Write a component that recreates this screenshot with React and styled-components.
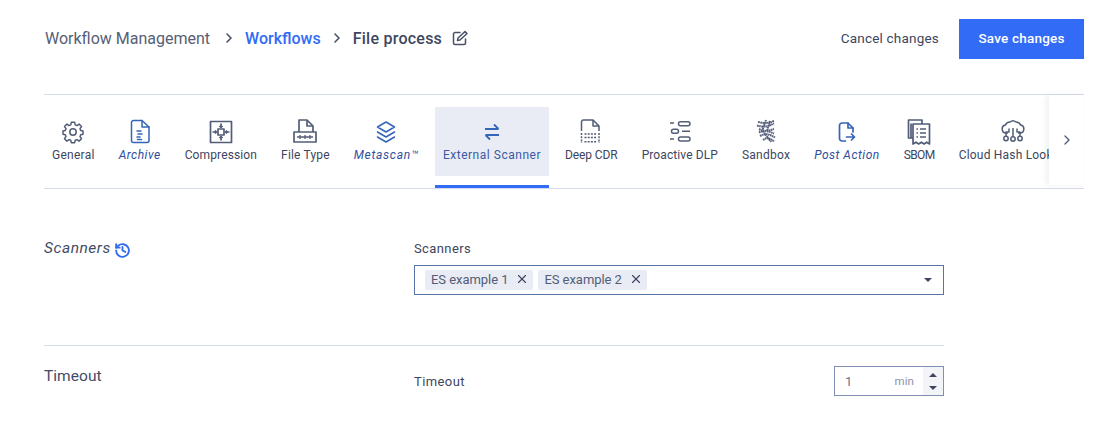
import styled, { createGlobalStyle } from 'styled-components'
import { ChevronRight, X } from 'lucide-react'

const GlobalStyle = createGlobalStyle`
  html, body {
    margin: 0;
    background: #fff;
    font-family: "Roboto", "Liberation Sans", sans-serif;
    color: #3d4660;
  }
`;

const Page = styled.div`
  width: 1098px;
  height: 440px;
  box-sizing: border-box;
  padding: 19px 14px 0 44px;
  overflow: hidden;
`;

const Header = styled.header`
  display: flex;
  align-items: center;
  justify-content: space-between;
  height: 40px;
`;

const Crumbs = styled.nav`
  display: flex;
  align-items: center;
  padding: 0 0 2px 1px;
  font-size: 16px;
`;

const Crumb = styled.span`
  color: ${(p) => p.$color || '#566075'};
  font-weight: ${(p) => p.$weight || 400};
  letter-spacing: ${(p) => p.$spacing || '0'};
`;

const CrumbArrow = styled(ChevronRight)`
  width: 16px;
  height: 16px;
  color: #485168;
  margin: ${(p) => p.$margin};
  stroke-width: 2.4;
`;

const EditIcon = styled.svg`
  width: 16px;
  height: 16px;
  margin-left: 10px;
  color: #485168;
`;

const Actions = styled.div`
  display: flex;
  align-items: center;
  gap: 20px;
`;

const CancelButton = styled.button`
  border: none;
  background: none;
  padding: 0 0 2px;
  font: 400 13.5px "Roboto", sans-serif;
  letter-spacing: 0.2px;
  color: #3d4660;
`;

const SaveButton = styled.button`
  width: 125px;
  height: 40px;
  border: none;
  padding: 0 0 2px;
  background: #316bf6;
  color: #fff;
  font: 500 13.5px "Roboto", sans-serif;
  letter-spacing: 0.2px;
`;

const TabBar = styled.div`
  position: relative;
  margin-top: 35px;
  height: 95px;
  box-sizing: border-box;
  border-top: 1px solid #d5dbea;
  border-bottom: 1px solid #d5dbea;
`;

const TabScroller = styled.div`
  display: flex;
  gap: 8px;
  width: 1005px;
  height: 93px;
  overflow: hidden;
`;

const Tab = styled.div`
  flex: none;
  display: flex;
  flex-direction: column;
  align-items: center;
  box-sizing: border-box;
  height: 93px;
  padding: 24px 8px 0;
  position: relative;
  color: ${(p) => (p.$active ? '#3b5aa6' : p.$accent ? '#2f4e9e' : '#3d4660')};
  &::before {
    content: '';
    display: ${(p) => (p.$active ? 'block' : 'none')};
    position: absolute;
    inset: 12px 0;
    background: #e9ecf4;
  }
  &::after {
    content: '';
    display: ${(p) => (p.$active ? 'block' : 'none')};
    position: absolute;
    left: 0;
    right: 0;
    bottom: 0;
    height: 3px;
    background: #316bf6;
  }
`;

const TabIcon = styled.svg`
  position: relative;
  width: 24px;
  height: 24px;
  overflow: visible;
  color: ${(p) => (p.$blue ? '#3565b8' : '#535d78')};
`;

const TabLabel = styled.span`
  position: relative;
  margin-top: 4px;
  font-size: 12px;
  line-height: 16px;
  letter-spacing: ${(p) => p.$spacing}px;
  white-space: nowrap;
  font-style: ${(p) => (p.$italic ? 'italic' : 'normal')};
`;

const ScrollArrow = styled.div`
  position: absolute;
  top: 0;
  right: 0;
  bottom: 3px;
  width: 35px;
  display: flex;
  align-items: center;
  justify-content: center;
  background: #fff;
  box-shadow: -3px 0 6px rgba(40, 50, 80, 0.07);
  color: #535d78;
`;

const Form = styled.div`
  width: 900px;
`;

const Row = styled.section`
  display: grid;
  grid-template-columns: 370px 530px;
  height: ${(p) => p.$height};
  padding-top: ${(p) => p.$top};
  box-sizing: border-box;
  border-bottom: ${(p) => (p.$line ? '1px solid #d5dbea' : 'none')};
`;

const SectionTitle = styled.h3`
  display: flex;
  align-items: flex-start;
  gap: 3px;
  margin: -1px 0 0;
  font-size: 15.5px;
  line-height: 20px;
  font-weight: 400;
  letter-spacing: ${(p) => (p.$italic ? '0.55px' : '0.05px')};
  color: #434c65;
  font-style: ${(p) => (p.$italic ? 'italic' : 'normal')};
`;

const HistoryIcon = styled.svg`
  width: 17px;
  height: 17px;
  margin-top: 4px;
  color: #316bf6;
`;

const FieldLabel = styled.label`
  display: block;
  font-size: 13px;
  line-height: 20px;
  letter-spacing: 0.4px;
  color: #3d4660;
`;

const TimeoutLabel = styled(FieldLabel)`
  padding-top: 2px;
`;

const Select = styled.div`
  display: flex;
  align-items: center;
  gap: 5px;
  height: 30px;
  margin-top: 6px;
  padding: 0 11px 0 10px;
  box-sizing: border-box;
  border: 1px solid #5873a6;
`;

const Chip = styled.span`
  display: flex;
  align-items: center;
  gap: 7px;
  height: 20px;
  box-sizing: border-box;
  padding: 0 4px 2px 6px;
  border-radius: 2px;
  background: #e9ecf4;
  font-size: 13px;
  letter-spacing: -0.05px;
  color: #535d78;
`;

const ChipClose = styled(X)`
  width: 14px;
  height: 14px;
  color: #3d4660;
`;

const Caret = styled.span`
  margin-left: auto;
  width: 0;
  height: 0;
  border-left: 4px solid transparent;
  border-right: 4px solid transparent;
  border-top: 4px solid #3d4660;
`;

const TimeoutField = styled.div`
  display: flex;
  align-items: center;
  justify-content: space-between;
  margin-top: -1px;
  height: 30px;
`;

const Stepper = styled.div`
  display: flex;
  width: 110px;
  height: 30px;
  box-sizing: border-box;
  border: 1px solid #8090b4;
  font-size: 13px;
  align-items: center;
`;

const StepValue = styled.span`
  margin-left: 10px;
  color: #6a7590;
`;

const StepUnit = styled.span`
  margin-left: auto;
  margin-right: 9px;
  font-size: 11.5px;
  letter-spacing: 0.1px;
  color: #8a94ac;
`;

const StepButtons = styled.div`
  display: flex;
  flex-direction: column;
  align-items: center;
  justify-content: center;
  gap: 9px;
  width: 20px;
  height: 100%;
  background: #f3f4f8;
`;

const StepArrow = styled.span`
  width: 0;
  height: 0;
  border-left: 4px solid transparent;
  border-right: 4px solid transparent;
  border-${(p) => (p.$up ? 'bottom' : 'top')}: 4px solid #3d4660;
`;

const line = { fill: 'none', stroke: 'currentColor', strokeWidth: 1.5, strokeLinecap: 'round', strokeLinejoin: 'round' };

const icons = {
  gear: (
    <g {...line}>
      <circle cx="12" cy="13" r="3.2" />
      <path d="M10.300 3.500h3.400l.5 2.600 1.700.7 2.200-1.500 2.400 2.400-1.500 2.200.7 1.700 2.300.5v3.400l-2.300.5-.7 1.700 1.500 2.200-2.400 2.400-2.200-1.500-1.700.7-.5 2.400h-3.400l-.5-2.400-1.700-.7-2.200 1.500-2.400-2.400 1.500-2.200-.7-1.700-2.300-.5v-3.400l2.300-.5.7-1.700-1.500-2.200 2.400-2.400 2.200 1.500 1.700-.7z" transform="translate(0 -.2)" />
    </g>
  ),
  archive: (
    <g {...line}>
      <path d="M5.500 1.500H14L21 8v13.500a2 2 0 0 1-2 2H5.500a2 2 0 0 1-2-2v-18a2 2 0 0 1 2-2z" />
      <path d="M14 1.500V8h7M9 12h4M10 15h4M9 18h3M9.500 20.500h4" />
    </g>
  ),
  compression: (
    <g {...line} strokeLinecap="butt" strokeWidth="1.700">
      <rect x="1.500" y="2.500" width="21" height="21" />
      <rect x="9" y="10" width="6" height="6" />
      <path d="M12 4.500V8M10.500 7l1.500 1.500L13.500 7M12 21.500V18M10.500 19l1.500-1.500 1.500 1.500M3.500 13H7M6 11.500 7.500 13 6 14.500M20.500 13H17M18 11.500 16.500 13 18 14.500" />
    </g>
  ),
  fileType: (
    <g {...line} strokeLinecap="butt" strokeWidth="1.700">
      <path d="M6 13V1h8l6 6v6" />
      <path d="M14 1v6h6" />
      <rect x="1" y="13" width="22" height="10" />
      <path d="M4 18h16M7 16v4M12 16v4M17 16v4" strokeWidth="1.300" />
    </g>
  ),
  layers: (
    <g {...line}>
      <path d="M12 3 3.500 8l8.500 5 8.500-5z" />
      <path d="m3.500 13 8.500 5 8.500-5M3.500 18l8.500 5 8.500-5" />
    </g>
  ),
  swap: (
    <g {...line} strokeWidth="1.800" strokeLinecap="butt">
      <path d="M5 10h13.500M14 5.500l4.500 4.500M19 16H5.500M10 20.500 5.500 16" />
    </g>
  ),
  cdr: (
    <g {...line} strokeLinecap="butt">
      <path d="M2.500 12V3a2 2 0 0 1 2-2H14l6 6v5" />
      <path d="M14 1v6h6" />
      <path d="M2.500 14v10M20 14v10" strokeDasharray="2 1.200" />
      <path d="M5.500 15h12M5.500 18.500h12M5.500 22.800h12" strokeDasharray="2 1.200" />
    </g>
  ),
  dlp: (
    <g {...line} strokeLinecap="butt">
      <path d="M2 4h4M14 12.300h8M2 20h4" />
      <rect x="10.500" y="3.700" width="11.500" height="4" rx="2" transform="translate(0 -1)" />
      <rect x="3.500" y="10.300" width="7" height="4" rx="2" />
      <rect x="10.500" y="18" width="11.500" height="4" rx="2" />
    </g>
  ),
  sandbox: (
    <g fill="none" stroke="currentColor" strokeWidth="2" strokeDasharray="1.600 .5">
      <path d="M4 3c6 1 9 2 16-1M3 6.500c7 2 11 1 17-2M5 10c6 3 9 2 15 0M5 13.500c6-3 10-1 15 1M6 17c6-3 9-2 15 1.500M9 21c4-3 7-2 11 1.500M12 1 8.500 11M16 2l-3 10M9 12l8 11" />
    </g>
  ),
  post: (
    <g {...line} strokeWidth="1.700">
      <path d="M10.500 22H7a2.500 2.500 0 0 1-2.500-2.500v-13A2.500 2.500 0 0 1 7 4h6l5 5v4" />
      <path d="M13 4v5h5M11.500 18H19.500M16.500 15l3 3-3 3" />
    </g>
  ),
  sbom: (
    <g {...line} strokeLinecap="butt" strokeWidth="1.700">
      <path d="M6 19H1.500V1H15v4" />
      <path d="M4 4.500V19" />
      <path d="M6 5h16.500v20l-2.700-1.800-2.700 1.800-2.700-1.800-2.700 1.800-2.700-1.800L6 25z" />
      <path d="M9.500 10h1.500M13 10h6M9.500 14h1.500M13 14h6M9.500 18h1.500M13 18h6" strokeWidth="1.500" />
    </g>
  ),
  cloud: (
    <g {...line} strokeLinecap="butt">
      <path d="M7 14H5a4 4 0 0 1-.7-7.900A5 5 0 0 1 9 3a4.500 4.500 0 0 1 6 0 5 5 0 0 1 4.700 3.100A4 4 0 0 1 19 14h-2" />
      <path d="M12 9v9M5 17.500V13h3V9.500M19 17.500V13h-3V9.500" />
      <circle cx="5" cy="19.500" r="2.200" />
      <circle cx="12" cy="20" r="2.200" />
      <circle cx="19" cy="19.500" r="2.200" />
    </g>
  ),
};

const tabs = [
  { label: 'General', icon: 'gear', spacing: 0.26 },
  { label: 'Archive', icon: 'archive', italic: true, spacing: 0.5 },
  { label: 'Compression', icon: 'compression', spacing: 0.13 },
  { label: 'File Type', icon: 'fileType', spacing: 0.17 },
  { label: 'Metascan™', icon: 'layers', italic: true, spacing: 0.73 },
  { label: 'External Scanner', icon: 'swap', active: true, spacing: 0.52 },
  { label: 'Deep CDR', icon: 'cdr', spacing: -0.1 },
  { label: 'Proactive DLP', icon: 'dlp', spacing: 0.1 },
  { label: 'Sandbox', icon: 'sandbox', spacing: 0.25 },
  { label: 'Post Action', icon: 'post', italic: true, spacing: 0.5 },
  { label: 'SBOM', icon: 'sbom', spacing: -0.6 },
  { label: 'Cloud Hash Lookup', icon: 'cloud', spacing: 0.2 },
];

const App = () => {
  return (
    <Page>
      <GlobalStyle />
      <Header>
        <Crumbs>
          <Crumb>Workflow Management</Crumb>
          <CrumbArrow $margin="0 8px 0 11px" />
          <Crumb $color="#316bf6" $weight={500}>Workflows</Crumb>
          <CrumbArrow $margin="0 8px 0 8px" />
          <Crumb $color="#3d4660" $weight={500} $spacing="0.25px">File process</Crumb>
          <EditIcon viewBox="0 0 16 16" fill="none" stroke="currentColor" strokeWidth="1.500" strokeLinejoin="round" strokeLinecap="round">
            <path d="M13.500 9v4a1.500 1.500 0 0 1-1.500 1.500H3A1.500 1.500 0 0 1 1.500 13V4A1.500 1.500 0 0 1 3 2.500h5" />
            <path d="M5.500 10.500 6 8l7-6.500L15 3.500 8 10z" />
          </EditIcon>
        </Crumbs>
        <Actions>
          <CancelButton>Cancel changes</CancelButton>
          <SaveButton>Save changes</SaveButton>
        </Actions>
      </Header>

      <TabBar>
        <TabScroller>
          {tabs.map((tab) => (
            <Tab key={tab.label} $active={tab.active} $accent={tab.italic}>
              <TabIcon viewBox="0 0 24 24" $blue={tab.italic || tab.active}>{icons[tab.icon]}</TabIcon>
              <TabLabel $italic={tab.italic} $spacing={tab.spacing}>{tab.label}</TabLabel>
            </Tab>
          ))}
        </TabScroller>
        <ScrollArrow><ChevronRight size={16} /></ScrollArrow>
      </TabBar>

      <Form>
        <Row $height="157px" $top="50px" $line>
          <SectionTitle $italic>
            Scanners
            <HistoryIcon viewBox="0 0 24 24" fill="none" stroke="currentColor" strokeWidth="2.600" strokeLinecap="round" strokeLinejoin="round">
              <path d="M3 12a9 9 0 1 0 3-6.700L3 8" />
              <path d="M3 3v5h5M12 7v5l4 2" />
            </HistoryIcon>
          </SectionTitle>
          <div>
            <FieldLabel>Scanners</FieldLabel>
            <Select>
              <Chip>ES example 1<ChipClose /></Chip>
              <Chip>ES example 2<ChipClose /></Chip>
              <Caret />
            </Select>
          </div>
        </Row>
        <Row $height="80px" $top="21px">
          <SectionTitle>Timeout</SectionTitle>
          <TimeoutField>
            <TimeoutLabel>Timeout</TimeoutLabel>
            <Stepper>
              <StepValue>1</StepValue>
              <StepUnit>min</StepUnit>
              <StepButtons>
                <StepArrow $up />
                <StepArrow />
              </StepButtons>
            </Stepper>
          </TimeoutField>
        </Row>
      </Form>
    </Page>
  );
};

export default App;
